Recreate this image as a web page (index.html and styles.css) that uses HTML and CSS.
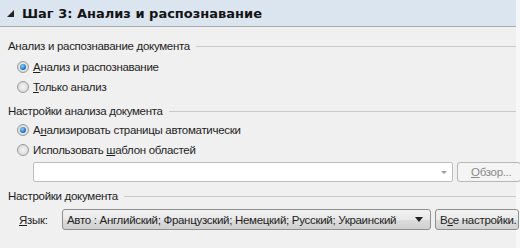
FILE: index.html
```html
<!DOCTYPE html>
<html lang="ru">
<head>
<meta charset="utf-8">
<link rel="stylesheet" href="styles.css">
</head>
<body>
<div class="page">
  <div class="header">
    <span class="tri"></span>
    <span class="title">Шаг 3: Анализ и распознавание</span>
  </div>
  <div class="content">
    <div class="legend"><span>Анализ и распознавание документа</span><i class="rule"></i></div>
    <div class="radio-row first"><span class="radio checked"></span><span><u>А</u>нализ и распознавание</span></div>
    <div class="radio-row"><span class="radio"></span><span><u>Т</u>олько анализ</span></div>

    <div class="legend l2"><span>Настройки анализа документа</span><i class="rule"></i></div>
    <div class="radio-row"><span class="radio checked"></span><span>А<u>н</u>ализировать страницы автоматически</span></div>
    <div class="radio-row"><span class="radio"></span><span>Использовать <u>ш</u>аблон областей</span></div>
    <div class="tpl-row">
      <div class="combo disabled"><span class="arrow-sm"></span></div>
      <div class="btn disabled"><u>О</u>бзор...</div>
    </div>

    <div class="legend l3"><span>Настройки документа</span><i class="rule"></i></div>
    <div class="lang-row">
      <span class="lang-label"><u>Я</u>зык:</span>
      <div class="combo lang"><span class="val">Авто : Английский; Французский; Немецкий; Русский; Украинский</span><span class="arrow"></span></div>
      <div class="btn all">В<u>с</u>е настройки.</div>
    </div>
  </div>
</div>
</body>
</html>
```
FILE: styles.css
```css
* { box-sizing: border-box; }
html, body { margin: 0; padding: 0; }
body {
  width: 520px; height: 248px; overflow: hidden;
  background: #f7f7f7;
  font-family: "Liberation Sans", Arial, sans-serif;
  font-size: 11.5px;
  letter-spacing: -0.3px;
  color: #1e1e1e;
}
.page {
  width: 516px; height: 248px;
  background: #f0f0f0;
}
.header {
  height: 27px;
  background: #dbe5f0;
  border-bottom: 1px solid #a7abb0;
  display: flex; align-items: center;
  padding-left: 7px;
}
.tri {
  width: 0; height: 0;
  border-left: 7px solid transparent;
  border-bottom: 7px solid #222;
  margin-right: 8px;
  margin-top: 1px;
}
.title {
  font-family: "DejaVu Sans", sans-serif;
  font-weight: bold;
  font-size: 13px;
  letter-spacing: 0;
  color: #141414;
}
.content { padding: 10px 0 0 8px; }
.legend {
  display: flex; align-items: center;
  height: 18px;
}
.legend .rule {
  flex: 1; height: 1px; background: #c8c8c8;
  margin-left: 6px;
}
.l2 { margin-top: 5px; }
.l3 { margin-top: 5px; }
.radio-row {
  display: flex; align-items: center;
  height: 20px;
  padding-left: 9px;
}
.radio-row.first { margin-top: 2px; }
.radio {
  width: 12px; height: 12px; border-radius: 50%;
  border: 1px solid #9a9a9a;
  background: radial-gradient(circle at 50% 50%, #f6f6f6 0%, #dcdcdc 70%, #cfcfcf 100%);
  margin-right: 4px;
  position: relative;
  flex: none;
}
.radio.checked::after {
  content: ""; position: absolute;
  left: 2px; top: 2px; width: 6px; height: 6px; border-radius: 50%;
  background: radial-gradient(circle at 40% 35%, #8fd0ff 0%, #1f78c8 60%, #0d4f9a 100%);
}
u { text-decoration: underline; text-underline-offset: 1px; }
.tpl-row {
  display: flex; align-items: center;
  padding-left: 25px;
  margin-top: 2px;
  height: 20px;
}
.combo {
  height: 20px;
  border: 1px solid #bdbdbd;
  background: #fff;
  display: flex; align-items: center;
  position: relative;
}
.combo.disabled { width: 420px; flex: none; border-radius: 2px; justify-content: flex-end; padding-right: 5px; }
.arrow-sm {
  width: 0; height: 0;
  border-left: 3px solid transparent; border-right: 3px solid transparent;
  border-top: 3px solid #9c9c9c;
}
.btn {
  height: 20px;
  border: 1px solid #b7b7b7;
  border-radius: 3px;
  display: flex; align-items: center; justify-content: center;
  margin-left: 4px;
  flex: none;
}
.btn.disabled { width: 64px; color: #8a8a8a; background: #f4f4f4; justify-content: flex-start; padding-left: 13px; white-space: nowrap; }
.lang-row {
  display: flex; align-items: center;
  margin-top: 4px;
  padding-left: 11px;
  height: 21px;
}
.lang-label { width: 43px; flex: none; }
.combo.lang {
  width: 369px; height: 21px; flex: none;
  border: 1px solid #8e8f8f;
  border-radius: 3px;
  background: linear-gradient(#f2f2f2, #e8e8e8 50%, #dcdcdc 51%, #d0d0d0);
  padding-left: 4px;
  justify-content: space-between;
  padding-right: 7px;
  white-space: nowrap;
}
.arrow {
  width: 0; height: 0; flex: none;
  border-left: 4px solid transparent; border-right: 4px solid transparent;
  border-top: 5px solid #222;
}
.btn.all {
  width: 84px; height: 21px;
  border-color: #8e8f8f;
  background: linear-gradient(#f2f2f2, #ebebeb 50%, #dddddd 51%, #d2d2d2);
  justify-content: flex-start;
  padding-left: 4px;
  white-space: nowrap;
}
```
